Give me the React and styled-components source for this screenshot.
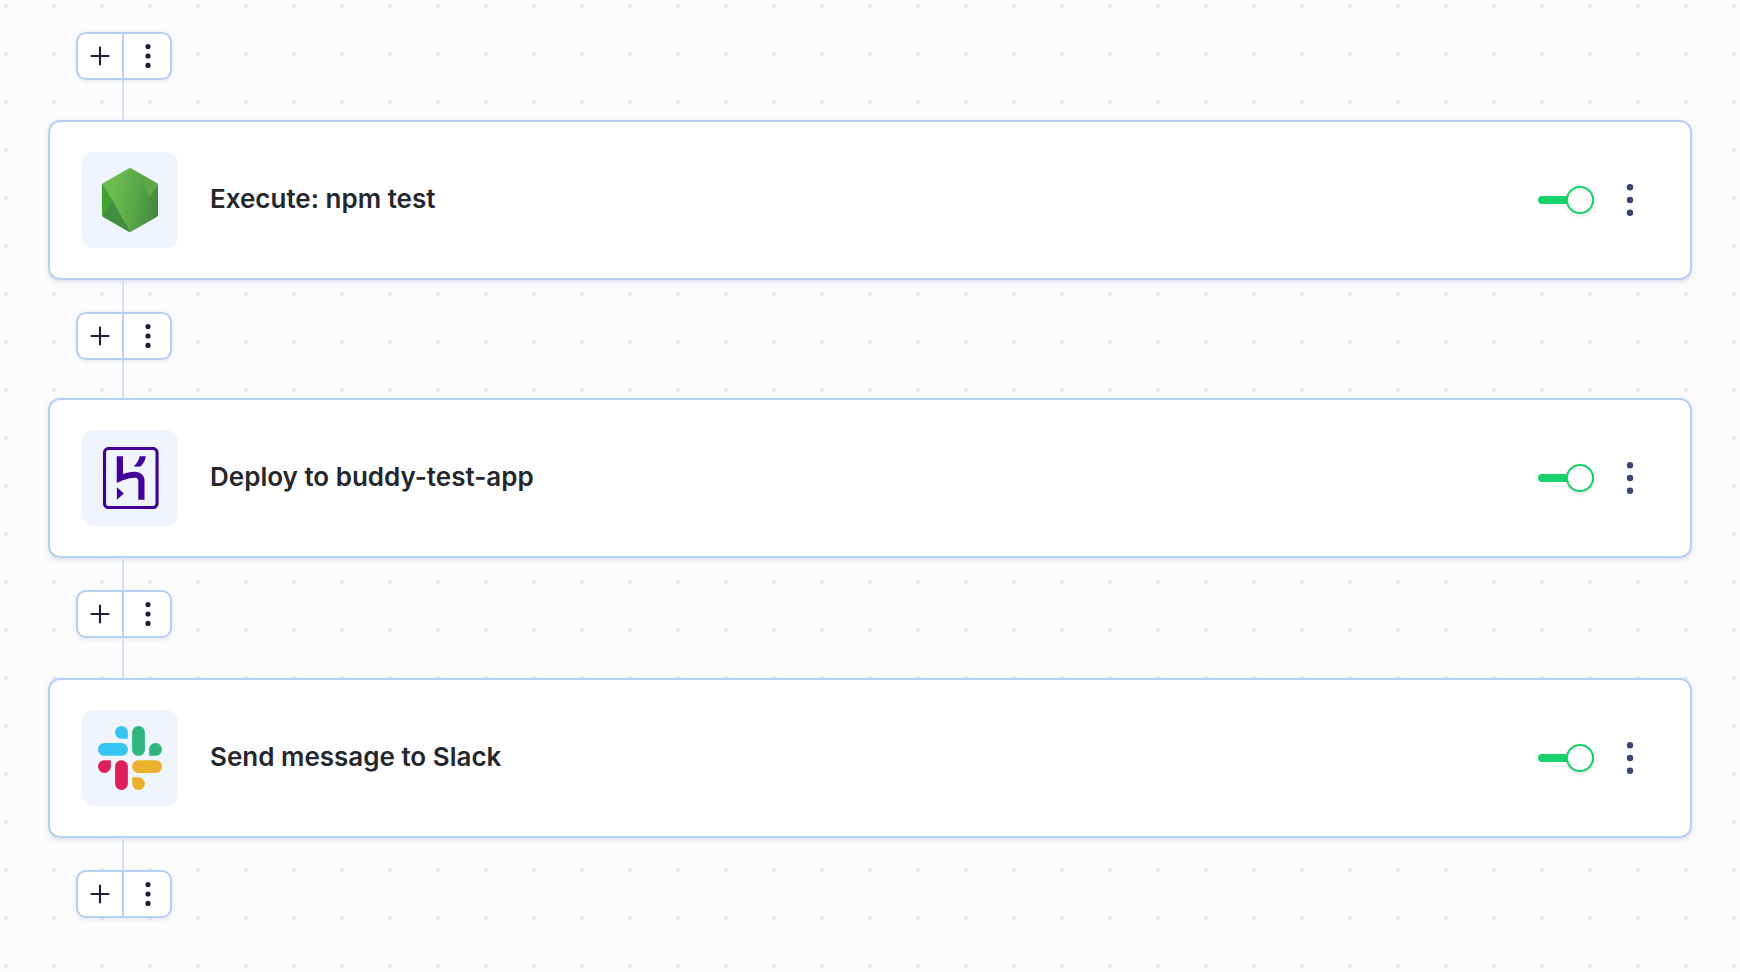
import styled, { createGlobalStyle } from "styled-components";

const GlobalStyle = createGlobalStyle`
  html, body {
    margin: 0;
    padding: 0;
  }
  body {
    width: 1740px;
    height: 972px;
    overflow: hidden;
    background-color: #fcfcfd;
    background-image: radial-gradient(circle at center, #e2ebfa 0, #e2ebfa 1.7px, transparent 2.3px);
    background-size: 48px 48px;
    background-position: -18px -18px;
    font-family: Inter, "Liberation Sans", sans-serif;
  }
`;

const Pipeline = styled.main`
  display: flex;
  flex-direction: column;
  width: 1644px;
  padding: 32px 0 0 48px;
`;

const Toolbar = styled.div`
  display: flex;
  width: 96px;
  height: 48px;
  margin-left: 28px;
  box-sizing: border-box;
  background: #fff;
  border: 2px solid #b7cff0;
  border-radius: 10px;
  box-shadow: 0 1px 4px rgba(60, 90, 150, 0.14);
`;

const ToolButton = styled.button`
  flex: 1;
  display: flex;
  align-items: center;
  justify-content: center;
  padding: 0 0 0 1px;
  background: none;
  border: 0;
  color: #1a1f36;
  cursor: pointer;

  &:first-child {
    flex: none;
    width: 46px;
    padding: 0;
    border-right: 2px solid #b7cff0;
  }
`;

const Connector = styled.div`
  width: 2px;
  height: ${(p) => p.$height}px;
  margin-left: 74px;
  background: #d5e2f6;
`;

const Card = styled.section`
  display: flex;
  align-items: center;
  height: 160px;
  box-sizing: border-box;
  padding: 0 55px 0 32px;
  background: #fff;
  border: 2px solid #b7cff0;
  border-radius: 12px;
  box-shadow: 0 2px 5px rgba(60, 90, 150, 0.16);
`;

const IconTile = styled.div`
  flex: none;
  display: flex;
  align-items: center;
  justify-content: center;
  width: 96px;
  height: 96px;
  background: #eff4fd;
  border-radius: 12px;
`;

const Title = styled.h3`
  flex: 1;
  margin: 0 0 2px 32px;
  color: #24272c;
  font-size: 26px;
  font-weight: 600;
  line-height: 32px;
`;

const Toggle = styled.div`
  position: relative;
  width: 56px;
  height: 8px;
  margin-right: 31px;
  background: #18d36b;
  border-radius: 4px 0 0 4px;
`;

const Thumb = styled.span`
  position: absolute;
  top: -10px;
  right: 0;
  width: 28px;
  height: 28px;
  box-sizing: border-box;
  background: #fff;
  border: 2px solid #18d36b;
  border-radius: 50%;
  box-shadow: 0 2px 4px rgba(40, 60, 90, 0.14);
`;

const MoreButton = styled.button`
  display: flex;
  padding: 0;
  background: none;
  border: 0;
  color: #3c4570;
  cursor: pointer;
`;

const Plus = () => (
  <svg width="22" height="22" viewBox="0 0 22 22" fill="none" stroke="currentColor" strokeWidth="2.1" strokeLinecap="round">
    <path d="M11 2.5v17M2.5 11h17" />
  </svg>
);

const Dots = ({ gap, r, height }) => (
  <svg width="10" height={height} viewBox={`0 0 10 ${height}`} fill="currentColor">
    <circle cx="5" cy={height / 2 - gap} r={r} />
    <circle cx="5" cy={height / 2} r={r} />
    <circle cx="5" cy={height / 2 + gap} r={r} />
  </svg>
);

const NodeIcon = () => (
  <svg width="56" height="64" viewBox="0 0 56 64">
    <defs>
      <linearGradient id="nodeMain" x1="0.2" y1="0.4" x2="1" y2="0.55">
        <stop offset="0" stopColor="#6dbc50" />
        <stop offset="0.5" stopColor="#58a748" />
        <stop offset="1" stopColor="#40893c" />
      </linearGradient>
      <linearGradient id="nodeLeft" x1="0" y1="1" x2="0.6" y2="0">
        <stop offset="0" stopColor="#3fa92c" />
        <stop offset="1" stopColor="#3f9f33" />
      </linearGradient>
      <linearGradient id="nodeTop" x1="0" y1="0" x2="1" y2="0.4">
        <stop offset="0" stopColor="#55a246" />
        <stop offset="1" stopColor="#5faa4a" />
      </linearGradient>
    </defs>
    <path d="M26.6.4a2.8 2.8 0 0 1 2.8 0L54.6 15a2.8 2.8 0 0 1 1.4 2.4v29.2a2.8 2.8 0 0 1-1.4 2.4L29.4 63.6a2.8 2.8 0 0 1-2.8 0L1.4 49a2.8 2.8 0 0 1-1.4-2.4V17.4A2.8 2.8 0 0 1 1.4 15z" fill="url(#nodeMain)" />
    <path d="M0 15.4 10.4 32 0 48z" fill="url(#nodeLeft)" />
    <path d="M0 48 10.4 32 28 64h-.6a3 3 0 0 1-.8-.4L1.4 49z" fill="#438d40" />
    <path d="M36 5.2 54.6 15a2.8 2.8 0 0 1 1.4 2.4l-9.2 12.4z" fill="url(#nodeTop)" />
  </svg>
);

const HerokuIcon = () => (
  <svg width="62" height="62" viewBox="-0.3 0 24 24" fill="#430098">
    <path d="M20.61 0H3.39C2.189 0 1.23.96 1.23 2.16v19.681c0 1.198.959 2.159 2.16 2.159h17.22c1.2 0 2.159-.961 2.159-2.159V2.16C22.77.96 21.811 0 20.61 0zm.96 21.841c0 .539-.421.96-.96.96H3.39c-.54 0-.96-.421-.96-.96V2.16c0-.54.42-.96.96-.96h17.22c.539 0 .96.42.96.96v19.681zM6.63 20.399L9.33 18 6.63 15.6v4.799zm9.72-9.719c-.479-.48-1.379-1.08-2.879-1.08-1.621 0-3.301.421-4.5.84V3.6h-2.4v10.38l1.68-.78s2.76-1.26 5.16-1.26c1.2 0 1.5.66 1.5 1.26v7.2h2.4v-7.2c.059-.179.059-1.501-.961-2.52zM13.17 7.5h2.7c1.2-1.26 1.8-2.599 1.98-3.899h-2.4c-.24 1.2-.93 2.639-2.28 3.899z" />
  </svg>
);

const SlackIcon = () => (
  <svg width="64" height="64" viewBox="0 0 2447.6 2452.5">
    <path fill="#36c5f0" d="M897.4 0C762.1.1 652.6 109.9 652.7 245.2c-.1 135.3 109.5 245.1 244.8 245.2h244.8V245.3C1142.4 110 1032.8.2 897.4 0c.1 0 .1 0 0 0m0 654H244.8C109.5 654.1-.1 763.9 0 899.2c-.2 135.3 109.4 245.1 244.7 245.3h652.7c135.3-.1 244.9-109.9 244.8-245.2.1-135.4-109.5-245.2-244.8-245.3z" />
    <path fill="#2eb67d" d="M2447.6 899.2c.1-135.3-109.5-245.1-244.8-245.2-135.3.1-244.9 109.9-244.8 245.2v245.3h244.8c135.3-.1 244.9-109.9 244.8-245.3zm-652.7 0V245.2C1795 110 1685.5.2 1550.2 0c-135.3.1-244.9 109.9-244.8 245.2v654c-.2 135.3 109.4 245.1 244.7 245.3 135.3-.1 244.9-109.9 244.8-245.3z" />
    <path fill="#ecb22e" d="M1550.1 2452.5c135.3-.1 244.9-109.9 244.8-245.2.1-135.3-109.5-245.1-244.8-245.2h-244.8v245.2c-.1 135.2 109.5 245 244.8 245.2zm0-654.1h652.7c135.3-.1 244.9-109.9 244.8-245.2.2-135.3-109.4-245.1-244.7-245.3h-652.7c-135.3.1-244.9 109.9-244.8 245.2-.1 135.4 109.4 245.2 244.7 245.3z" />
    <path fill="#e01e5a" d="M0 1553.2c-.1 135.3 109.5 245.1 244.8 245.2 135.3-.1 244.9-109.9 244.8-245.2V1308H244.8C109.5 1308.1-.1 1417.9 0 1553.2zm652.7 0v654c-.2 135.3 109.4 245.1 244.7 245.3 135.3-.1 244.9-109.9 244.8-245.2v-653.9c.2-135.3-109.4-245.1-244.7-245.3-135.4 0-244.9 109.8-244.8 245.1z" />
  </svg>
);

const steps = [
  { title: "Execute: npm test", icon: <NodeIcon />, above: 40 },
  { title: "Deploy to buddy-test-app", icon: <HerokuIcon />, above: 38 },
  { title: "Send message to Slack", icon: <SlackIcon />, above: 40 },
];

const AddBar = () => (
  <Toolbar>
    <ToolButton>
      <Plus />
    </ToolButton>
    <ToolButton>
      <Dots gap={9.4} r={2.6} height={28} />
    </ToolButton>
  </Toolbar>
);

const App = () => (
  <>
    <GlobalStyle />
    <Pipeline>
      {steps.map((step) => (
        <div key={step.title}>
          <AddBar />
          <Connector $height={step.above} />
          <Card>
            <IconTile>{step.icon}</IconTile>
            <Title>{step.title}</Title>
            <Toggle>
              <Thumb />
            </Toggle>
            <MoreButton>
              <Dots gap={12.8} r={3.2} height={36} />
            </MoreButton>
          </Card>
          <Connector $height={32} />
        </div>
      ))}
      <AddBar />
    </Pipeline>
  </>
);

export default App;
